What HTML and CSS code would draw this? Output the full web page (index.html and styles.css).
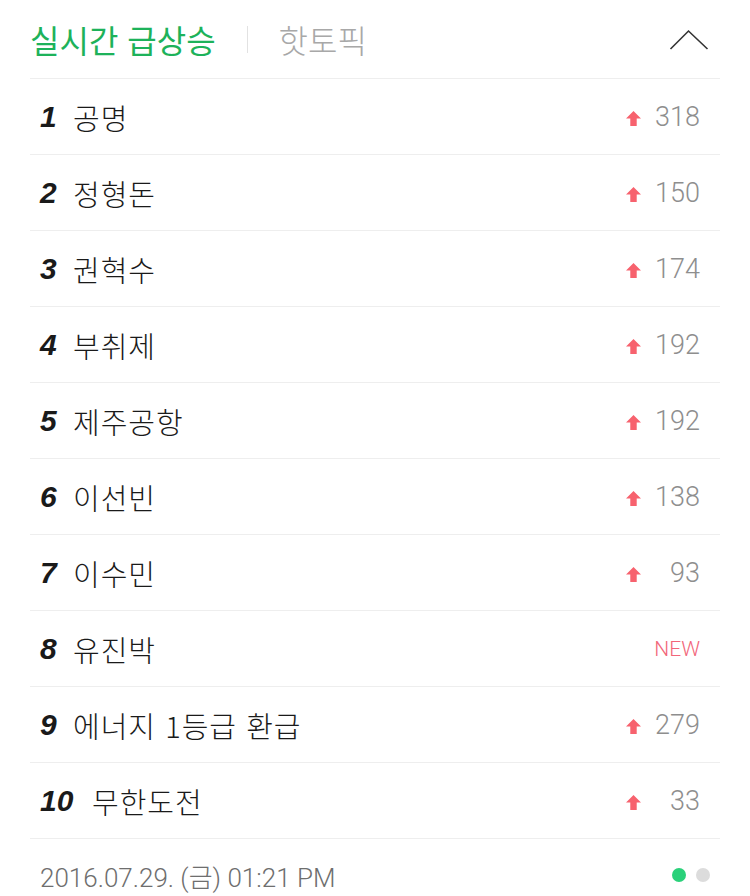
FILE: index.html
```html
<!DOCTYPE html>
<html lang="ko">
<head>
<meta charset="utf-8">
<link rel="stylesheet" href="styles.css">
</head>
<body>
<div class="panel">
  <div class="header">
    <div class="tabs">
      <span class="tab active">실시간 급상승</span>
      <span class="sep"></span>
      <span class="tab">핫토픽</span>
    </div>
    <svg class="chev" width="40" height="22" viewBox="0 0 40 22"><polyline points="1.5,20 19.5,2 38.5,20" fill="none" stroke="#333" stroke-width="1.6"/></svg>
  </div>
  <ul class="list">
    <li class="row"><span class="rank">1</span><span class="kw">공명</span><span class="chg"><svg class="up" viewBox="0 0 14 14"><path d="M7 0 L14 7 L10 7 L10 14 L4 14 L4 7 L0 7 Z"/></svg><span class="num">318</span></span></li>
    <li class="row"><span class="rank">2</span><span class="kw">정형돈</span><span class="chg"><svg class="up" viewBox="0 0 14 14"><path d="M7 0 L14 7 L10 7 L10 14 L4 14 L4 7 L0 7 Z"/></svg><span class="num">150</span></span></li>
    <li class="row"><span class="rank">3</span><span class="kw">권혁수</span><span class="chg"><svg class="up" viewBox="0 0 14 14"><path d="M7 0 L14 7 L10 7 L10 14 L4 14 L4 7 L0 7 Z"/></svg><span class="num">174</span></span></li>
    <li class="row"><span class="rank">4</span><span class="kw">부취제</span><span class="chg"><svg class="up" viewBox="0 0 14 14"><path d="M7 0 L14 7 L10 7 L10 14 L4 14 L4 7 L0 7 Z"/></svg><span class="num">192</span></span></li>
    <li class="row"><span class="rank">5</span><span class="kw">제주공항</span><span class="chg"><svg class="up" viewBox="0 0 14 14"><path d="M7 0 L14 7 L10 7 L10 14 L4 14 L4 7 L0 7 Z"/></svg><span class="num">192</span></span></li>
    <li class="row"><span class="rank">6</span><span class="kw">이선빈</span><span class="chg"><svg class="up" viewBox="0 0 14 14"><path d="M7 0 L14 7 L10 7 L10 14 L4 14 L4 7 L0 7 Z"/></svg><span class="num">138</span></span></li>
    <li class="row"><span class="rank">7</span><span class="kw">이수민</span><span class="chg"><svg class="up" viewBox="0 0 14 14"><path d="M7 0 L14 7 L10 7 L10 14 L4 14 L4 7 L0 7 Z"/></svg><span class="num">93</span></span></li>
    <li class="row"><span class="rank">8</span><span class="kw">유진박</span><span class="chg"><span class="new">NEW</span></span></li>
    <li class="row"><span class="rank">9</span><span class="kw">에너지 1등급 환급</span><span class="chg"><svg class="up" viewBox="0 0 14 14"><path d="M7 0 L14 7 L10 7 L10 14 L4 14 L4 7 L0 7 Z"/></svg><span class="num">279</span></span></li>
    <li class="row"><span class="rank">10</span><span class="kw">무한도전</span><span class="chg"><svg class="up" viewBox="0 0 14 14"><path d="M7 0 L14 7 L10 7 L10 14 L4 14 L4 7 L0 7 Z"/></svg><span class="num">33</span></span></li>
  </ul>
  <div class="footer">
    <span class="date">2016.07.29. (금) 01:21 PM</span>
    <span class="dots"><span class="dot on"></span><span class="dot"></span></span>
  </div>
</div>
</body>
</html>
```
FILE: styles.css
```css
* { box-sizing: border-box; }
html, body { margin: 0; padding: 0; background: #fff; }
body {
  font-family: "Noto Sans CJK KR", "Liberation Sans", sans-serif;
  width: 750px;
  height: 896px;
  overflow: hidden;
}
.panel { padding: 0 30px; }
.header {
  height: 79px;
  display: flex;
  align-items: center;
  justify-content: space-between;
  border-bottom: 1px solid #eeeeee;
}
.tabs { display: flex; align-items: center; }
.tab {
  font-size: 32px;
  font-weight: 300;
  color: #a8a8a8;
  letter-spacing: 0;
  line-height: 40px;
}
.tab.active { color: #1db25a; font-weight: 400; }
.sep {
  width: 1px;
  height: 27px;
  background: #e2e2e2;
  margin: 0 31px 0 31px;
}
.chev { margin-right: 11px; margin-top: 1px; display: block; }
.list { list-style: none; margin: 0; padding: 0; }
.row {
  height: 76px;
  border-bottom: 1px solid #eeeeee;
  display: flex;
  align-items: center;
  padding-left: 10px;
}
.rank {
  font-family: "Liberation Sans", sans-serif;
  font-weight: bold;
  font-style: italic;
  font-size: 30px;
  color: #1a1a1a;
  min-width: 33px;
}
.row:last-child .rank { min-width: 52px; }
.kw {
  font-size: 29px;
  font-weight: 300;
  letter-spacing: 1px;
  color: #1a1a1a;
  flex: 1;
  line-height: 36px;
}
.chg {
  display: flex;
  align-items: center;
  padding-right: 20px;
}
.up { width: 15px; height: 15px; fill: #f7626e; margin-right: 12px; margin-top: 3px; }
.num {
  font-family: Roboto, "Liberation Sans", sans-serif;
  font-weight: 300;
  font-size: 27px;
  color: #8e8e8e;
  min-width: 47px;
  text-align: right;
}
.new {
  font-family: Roboto, "Liberation Sans", sans-serif;
  font-weight: 300;
  font-size: 21px;
  color: #f2667a;
}
.footer {
  height: 57px;
  display: flex;
  align-items: center;
  justify-content: space-between;
  padding-left: 10px;
  padding-top: 15px;
}
.date {
  font-family: Roboto, "Noto Sans CJK KR", sans-serif;
  font-weight: 300;
  font-size: 26px;
  color: #6e6e6e;
}
.dots { display: flex; gap: 10px; padding-right: 10px; }
.dot { width: 14px; height: 14px; border-radius: 50%; background: #dcdcdc; }
.dot.on { background: #2ad17a; }
```
